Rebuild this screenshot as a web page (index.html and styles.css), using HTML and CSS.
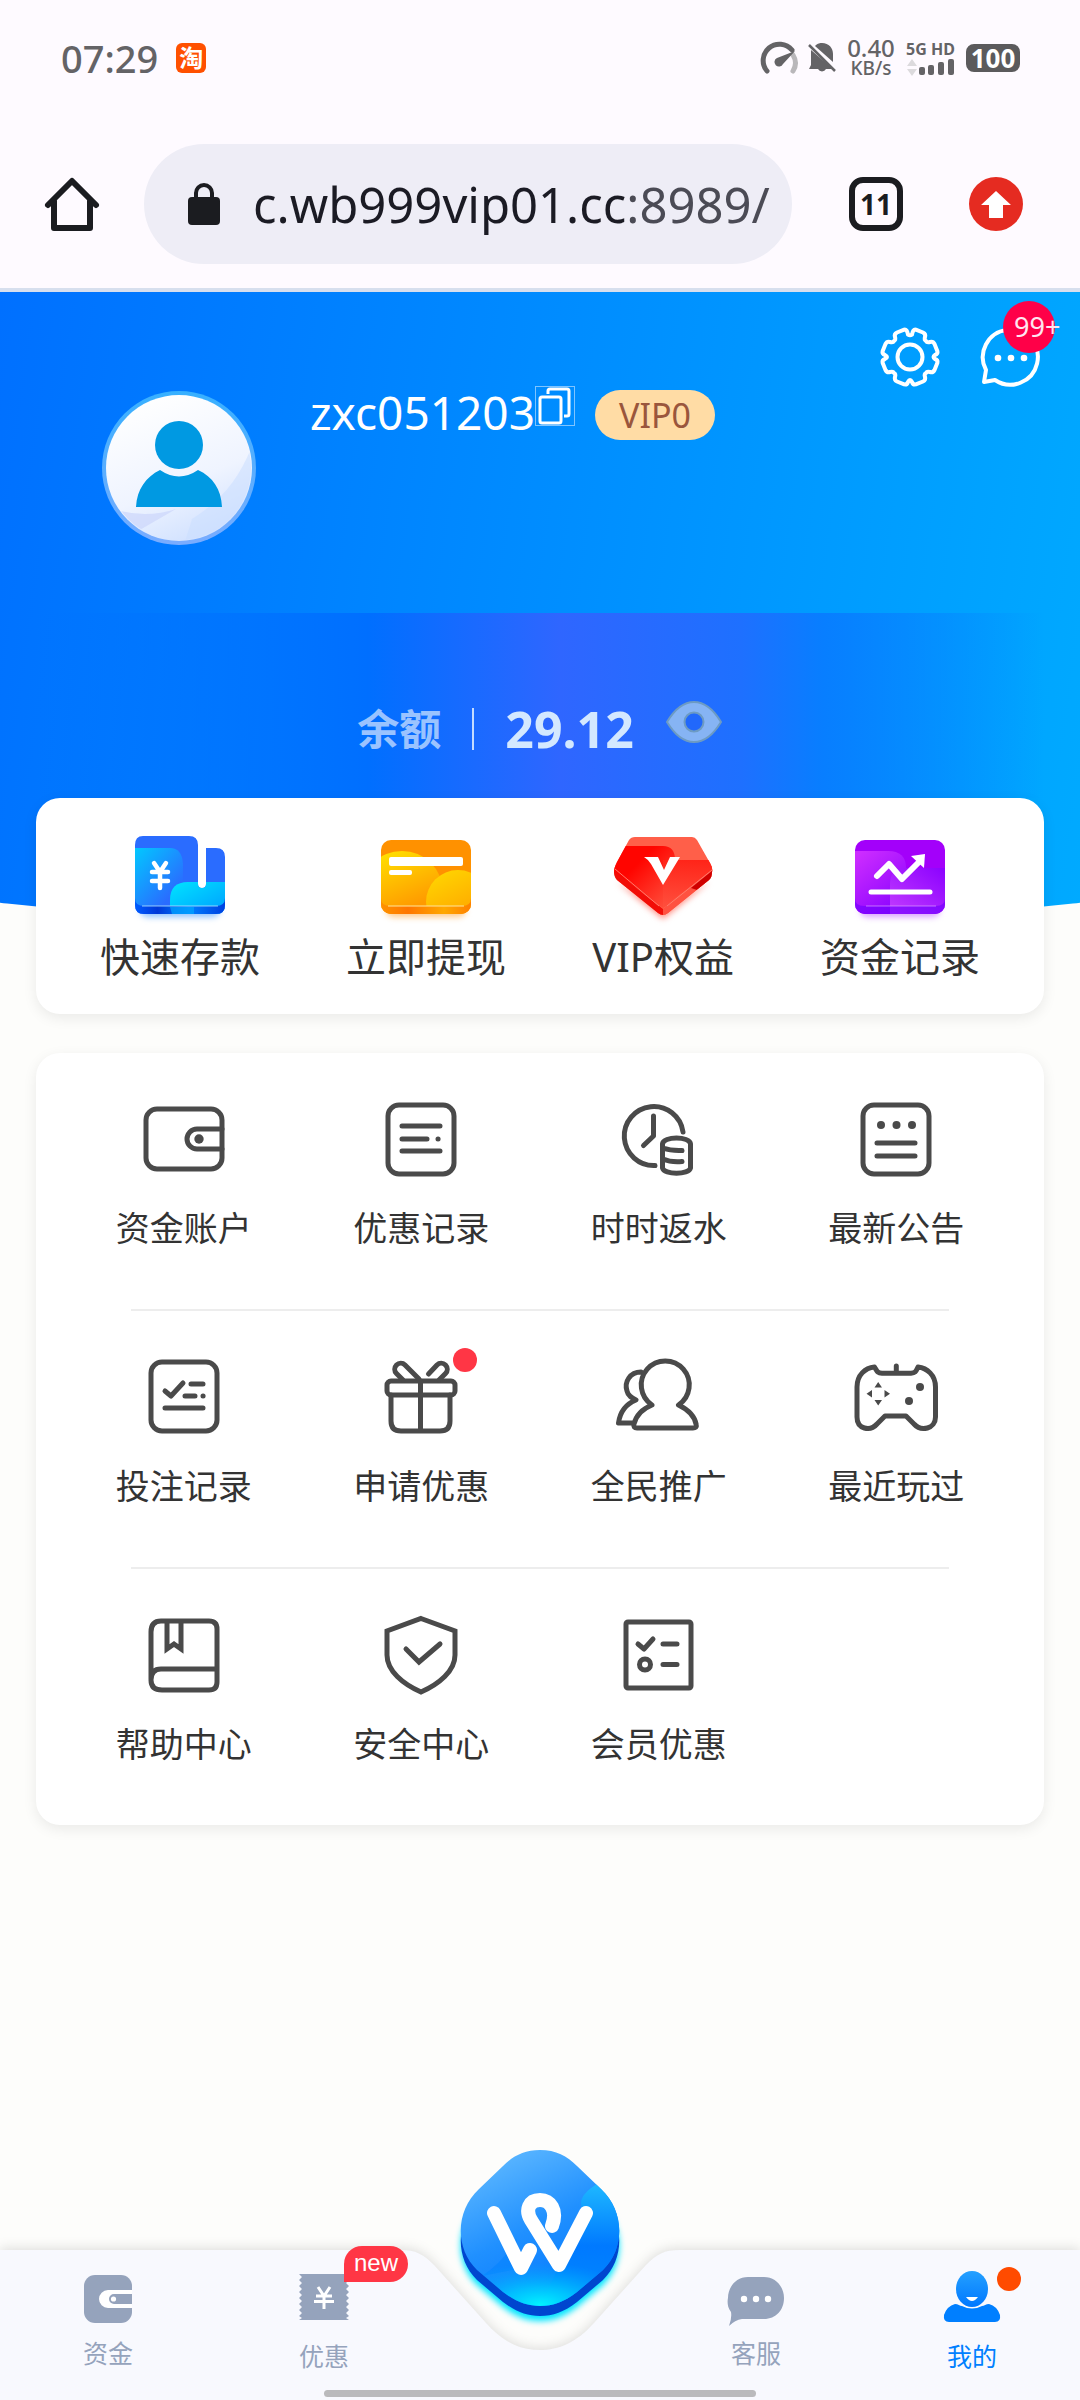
FILE: index.html
```html
<!DOCTYPE html>
<html lang="zh-CN">
<head>
<meta charset="utf-8">
<meta name="viewport" content="width=device-width, initial-scale=1">
<title>我的</title>
<link rel="stylesheet" href="styles.css">
</head>
<body>
<header class="chrome">
  <div class="status">
    <time class="clock">07:29</time>
    <span class="tao">淘</span>
    <div class="status-right">
      <svg class="gauge" width="36" height="32" viewBox="0 0 36 32" fill="none" stroke-linecap="round" stroke-width="5">
        <path d="M31 13 A15 15 0 0 1 31 29" stroke="#b9b7ba"/>
        <path d="M5 29 A15.500 15.500 0 0 1 30 8" stroke="#646366"/>
        <path d="M33 9 L21 22 A4.500 4.500 0 1 1 15 16 Z" fill="#646366"/>
      </svg>
      <svg width="28" height="32" viewBox="0 0 28 32">
        <path d="M7 4 C10 1 12 1 14 1 C21 1 25 6 25 12 V20 L7 4 Z M3 8 L25 27 H18 A4.500 4.500 0 0 1 10 27 H1 L3 23 Z" fill="#646366"/>
        <path d="M1 3 L27 29" stroke="#646366" stroke-width="2.500"/>
      </svg>
      <div class="speed"><span>0.40</span><span class="unit">KB/s</span></div>
      <div class="network">
        <span>5G HD</span>
        <svg width="50" height="18" viewBox="0 0 50 18">
          <path d="M1 8 L6 1 L11 8 Z M1 11 L6 18 L11 11 Z" fill="#dcdadd"/>
          <g fill="#646366"><rect x="13" y="9" width="6" height="8" rx="2"/><rect x="22" y="7" width="6" height="10" rx="2"/><rect x="32" y="4" width="6" height="13" rx="2"/><rect x="42" y="1" width="6" height="16" rx="2"/></g>
        </svg>
      </div>
      <span class="battery">100</span>
    </div>
  </div>
  <div class="toolbar">
    <button class="tool" aria-label="主页">
      <svg width="54" height="54" viewBox="0 0 54 54" fill="none" stroke="#1b1c20" stroke-width="6" stroke-linejoin="round" stroke-linecap="round"><path d="M3 28 L27 4 L51 28 M9 24 V51 H45 V24"/></svg>
    </button>
    <button class="address">
      <svg width="32" height="42" viewBox="0 0 32 42"><rect y="14" width="32" height="28" rx="4" fill="#1b1c20"/><path d="M8 16 V10 A8 8 0 0 1 24 10 V16" fill="none" stroke="#1b1c20" stroke-width="4"/></svg>
      <span class="url">c.wb999vip01.cc<span class="url-rest">:8989/</span></span>
    </button>
    <button class="tool tabs">11</button>
    <button class="tool" aria-label="更新">
      <svg width="54" height="54" viewBox="0 0 54 54"><circle cx="27" cy="27" r="27" fill="#e52b21"/><path d="M27 14 L42 28 H34 V41 H20 V28 H12 Z" fill="#fff"/></svg>
    </button>
  </div>
</header>

<main>
  <section class="hero">
    <div class="profile">
      <svg class="avatar" width="154" height="154" viewBox="0 0 154 154">
        <defs>
          <linearGradient id="face" x1="0.300" y1="0" x2="0.700" y2="1"><stop offset="0" stop-color="#fff"/><stop offset="0.600" stop-color="#eff4ff"/><stop offset="1" stop-color="#cfe0ff"/></linearGradient>
          <linearGradient id="ring" x1="0" y1="0" x2="0" y2="1"><stop offset="0" stop-color="#37b0ff"/><stop offset="1" stop-color="#7aacff"/></linearGradient>
          <clipPath id="disc"><circle cx="77" cy="77" r="72"/></clipPath>
        </defs>
        <circle cx="77" cy="77" r="77" fill="url(#ring)"/>
        <circle cx="77" cy="77" r="73" fill="url(#face)"/>
        <g clip-path="url(#disc)"><path d="M150 55 C138 85 122 108 90 128 L82 154 H154 Z" fill="#cadfff" opacity="0.550"/><path d="M10 118 Q44 128 74 118 L36 140 Z" fill="#ccd6fb" opacity="0.700"/></g>
        <circle cx="77" cy="54" r="24" fill="#0099e2"/>
        <path d="M34 116 C35 98 44 86 58 79 Q77 92 96 79 C111 86 119 98 120 116 Z" fill="#0099e2"/>
      </svg>
      <div class="identity">
        <h1 class="username">zxc051203</h1>
        <button class="copy" aria-label="复制">
          <svg width="40" height="40" viewBox="0 0 40 40" fill="none" stroke="#fff"><rect x="0.500" y="0.500" width="39" height="39" stroke="#7fc4ff"/><g stroke-width="3"><rect x="5" y="11" width="21" height="26" rx="2"/><path d="M13 8 V5 Q13 3 15 3 H32 Q34 3 34 5 V28 Q34 30 32 30 H29"/></g></svg>
        </button>
        <span class="vip">VIP0</span>
      </div>
      <div class="actions">
        <button aria-label="设置">
          <svg width="60" height="60" viewBox="0 0 60 60" fill="none" stroke="#fff" stroke-width="4" stroke-linejoin="round"><path d="M28 7.600 Q30 9 32 7.600 Q33 2 35.800 2.600 L43 5.500 Q46 7 45 10 Q44 13 46 14 Q47 16 50 15 Q53 14 54.500 17 L57.400 24.200 Q58 27 55 28 Q52 30 55 32 Q58 33 57.400 35.800 L54.500 43 Q53 46 50 45 Q47 44 46 46 Q44 47 45 50 Q46 53 43 54.500 L35.800 57.400 Q33 58 32 55 Q30 51 28 55 Q27 58 24.200 57.400 L17 54.500 Q14 53 15 50 Q16 47 14 46 Q13 44 10 45 Q7 46 5.500 43 L2.600 35.800 Q2 33 5 32 Q9 30 5 28 Q2 27 2.600 24.200 L5.500 17 Q7 14 10 15 Q13 16 14 14 Q16 13 15 10 Q14 7 17 5.500 L24.200 2.600 Q27 2 28 7.600 Z"/><circle cx="30" cy="30" r="12.500"/></svg>
        </button>
        <button class="message" aria-label="消息">
          <svg width="60" height="60" viewBox="0 0 60 60"><path d="M5 43 A27.500 27.500 0 1 1 14 53 L3 55 Z" fill="none" stroke="#fff" stroke-width="4" stroke-linejoin="round"/><g fill="#fff"><circle cx="17" cy="31" r="3.300"/><circle cx="30" cy="31" r="3.300"/><circle cx="43" cy="31" r="3.300"/></g></svg>
          <span class="count">99+</span>
        </button>
      </div>
    </div>
    <div class="balance">
      <span class="balance-label">余额</span>
      <i class="bar"></i>
      <strong class="amount">29.12</strong>
      <button class="eye" aria-label="隐藏余额">
        <svg width="58" height="42" viewBox="0 0 58 42"><path d="M2 21 Q14 1 29 1 Q44 1 56 21 Q44 41 29 41 Q14 41 2 21 Z" fill="#86b4f4" stroke="#6d9bc3" stroke-width="2"/><circle cx="29" cy="21" r="9.500" fill="#2168fb" stroke="#6d9bc3" stroke-width="2"/></svg>
      </button>
    </div>
  </section>

  <nav class="card quick">
    <a href="#">
      <svg width="96" height="88" viewBox="0 0 96 88">
        <defs>
          <linearGradient id="b1" x1="0" y1="0" x2="1" y2="1"><stop offset="0" stop-color="#00ccff"/><stop offset="0.800" stop-color="#2a6cff"/></linearGradient>
          <linearGradient id="b2" x1="0" y1="0" x2="1" y2="1"><stop offset="0" stop-color="#00e4ff"/><stop offset="1" stop-color="#009cff"/></linearGradient>
          <linearGradient id="b3"><stop offset="0" stop-color="#005cff"/><stop offset="0.250" stop-color="#0038d8"/><stop offset="0.600" stop-color="#0080ff"/><stop offset="1" stop-color="#003fe0"/></linearGradient>
          <clipPath id="bc"><path d="M11 2 H57 Q66 2 66 11 V50 Q66 54 70 54 Q74 54 74 50 V14 H84 Q93 14 93 23 V71 Q93 80 84 80 H12 Q3 80 3 71 V11 Q3 2 11 2 Z"/></clipPath>
        </defs>
        <rect x="8" y="70" width="80" height="13" rx="8" fill="#8ec2ff" class="glow"/>
        <g clip-path="url(#bc)"><rect width="96" height="88" fill="#2a6cff"/><path d="M0 14 H38 Q50 14 51 30 V72 H0 Z" fill="url(#b1)"/><path d="M38 80 V66 Q38 48 56 48 H96 V80 Z" fill="url(#b2)"/><path d="M3 64 Q3 72 12 72 H84 Q93 72 93 64 V80 H3 Z" fill="url(#b3)"/><path d="M38 73 H62 V80 H40 Z" fill="#00a5ff" opacity="0.700"/><path d="M10 72 H86" stroke="#b5e8ff" opacity="0.800"/></g>
        <path d="M22 29 L28 38 L34 29 M20 38 H36 M20 47 H36 M28 38 V54" fill="none" stroke="#fff" stroke-width="4.500" stroke-linecap="round"/>
      </svg>
      <span>快速存款</span>
    </a>
    <a href="#">
      <svg width="96" height="88" viewBox="0 0 96 88">
        <defs>
          <linearGradient id="o1" x1="0.300" y1="0" x2="0.700" y2="1"><stop offset="0" stop-color="#ffe000"/><stop offset="0.700" stop-color="#ff9a00"/></linearGradient>
          <linearGradient id="o2" x1="0.200" y1="0" x2="0.700" y2="1"><stop offset="0" stop-color="#ffd500"/><stop offset="1" stop-color="#ff9800"/></linearGradient>
          <linearGradient id="o3"><stop offset="0" stop-color="#ff9200"/><stop offset="0.300" stop-color="#ff7600"/><stop offset="0.700" stop-color="#ffa800"/><stop offset="1" stop-color="#ff8000"/></linearGradient>
          <clipPath id="oc"><rect x="3" y="6" width="90" height="74" rx="10"/></clipPath>
        </defs>
        <rect x="8" y="70" width="80" height="13" rx="8" fill="#ffc98a" class="glow"/>
        <g clip-path="url(#oc)"><rect width="96" height="88" fill="#ff9100"/><circle cx="24" cy="58" r="41" fill="url(#o1)"/><circle cx="80" cy="68" r="32" fill="url(#o2)"/><path d="M3 64 Q3 72 12 72 H84 Q93 72 93 64 V80 H3 Z" fill="url(#o3)"/><path d="M10 72 H86" stroke="#ffe59a"/></g>
        <rect x="11" y="23" width="74" height="9" rx="2" fill="#fff"/><rect x="11" y="36" width="23" height="5" rx="2" fill="#fff"/>
      </svg>
      <span>立即提现</span>
    </a>
    <a href="#">
      <svg width="96" height="88" viewBox="0 0 96 88">
        <defs>
          <linearGradient id="r1" x1="0" y1="0" x2="1" y2="0.600"><stop offset="0.300" stop-color="#ff0500"/><stop offset="1" stop-color="#ff6a52"/></linearGradient>
          <linearGradient id="r2" x1="0" y1="1" x2="1" y2="0"><stop offset="0" stop-color="#ff513f"/><stop offset="1" stop-color="#ff0700"/></linearGradient>
          <clipPath id="rc"><path d="M20 3 H77 Q80 3 82 6 L95 29 Q98 34 97 38 Q97 43 94 46 L53 79 Q48 83 43 79 L2 46 Q-1 43 -1 37 Q-1 34 2 28 L14 6 Q16 3 20 3 Z"/></clipPath>
        </defs>
        <path d="M2 48 L48 85 L94 48 L48 70 Z" fill="#ff8c80" class="glow"/>
        <g clip-path="url(#rc)"><rect x="-2" width="102" height="88" fill="#ff5f49"/><path d="M-2 12 H48 Q60 12 60 26 H102 V40 L48 74 L-2 38 Z" fill="url(#r1)"/><path d="M48 26 H98 V36 L48 73 Z" fill="url(#r2)" opacity="0.600"/><path d="M-2 36 L48 75 V88 H-2 Z" fill="#f20d07"/><path d="M98 36 L48 75 V88 H98 Z" fill="#ff5140"/><path d="M98 36 L76 54 L82 56 L98 46 Z" fill="#cf0000"/><path d="M0 35 L44 72 M97 36 L52 72" stroke="#ff7a6c" stroke-width="1"/></g>
        <path d="M29 23 H43 L49 36 L55 23 H65 L48 51 L36 30 Q34 26 29 23 Z" fill="#fff"/>
      </svg>
      <span>VIP权益</span>
    </a>
    <a href="#">
      <svg width="96" height="88" viewBox="0 0 96 88">
        <defs>
          <linearGradient id="p1" x1="0.200" y1="0" x2="0.900" y2="1"><stop offset="0" stop-color="#cc2cff"/><stop offset="1" stop-color="#8600ff"/></linearGradient>
          <linearGradient id="p2" x1="0" y1="1" x2="1" y2="0"><stop offset="0" stop-color="#c33cff"/><stop offset="1" stop-color="#8a00ff"/></linearGradient>
          <clipPath id="pc"><rect x="3" y="6" width="90" height="74" rx="10"/></clipPath>
        </defs>
        <rect x="8" y="70" width="80" height="13" rx="8" fill="#d9a0ff" class="glow"/>
        <g clip-path="url(#pc)"><rect width="96" height="88" fill="#a300fa"/><path d="M0 17 H36 Q54 17 54 34 V80 H0 Z" fill="url(#p1)"/><path d="M38 80 V50 Q38 34 54 34 H96 V80 Z" fill="url(#p2)"/><path d="M3 64 Q3 72 12 72 H84 Q93 72 93 64 V80 H3 Z" fill="#7200ff" opacity="0.650"/><path d="M14 72 H84" stroke="#dc9aff" opacity="0.700"/></g>
        <path d="M25 42 L37 30 L50 45 L67 28" fill="none" stroke="#fff" stroke-width="6" stroke-linecap="round" stroke-linejoin="round"/><path d="M59 22 L73 20 L72 34 Z" fill="#fff"/><path d="M19 58 H78" stroke="#fff" stroke-width="5" stroke-linecap="round"/>
      </svg>
      <span>资金记录</span>
    </a>
  </nav>

  <nav class="card menu">
    <div class="row">
      <a href="#"><svg class="line" viewBox="0 0 84 84"><rect x="4" y="12" width="76" height="60" rx="11"/><path d="M80 32 H55 A10 10 0 0 0 55 52 H80"/><circle class="dot" cx="57" cy="42" r="4.700"/></svg><span>资金账户</span></a>
      <a href="#"><svg class="line" viewBox="0 0 84 84"><rect x="9" y="8" width="66" height="69" rx="11"/><path d="M23 29 H61 M23 42 H48 M59 42 h0.100 M23 54 H61"/></svg><span>优惠记录</span></a>
      <a href="#"><svg class="line" viewBox="0 0 84 84"><path d="M66 35 A29.500 29.500 0 1 0 38 68.500 M36.500 19 V39 L26.500 48.500 M45.500 47 C46 39 73 39 73.500 47 V71 C72 78 47 78 45.500 71 Z M46 51 Q54 54 65 53.500 M46 62 Q54 65.500 65 64.500"/></svg><span>时时返水</span></a>
      <a href="#"><svg class="line" viewBox="0 0 84 84"><rect x="9" y="8" width="66" height="69" rx="11"/><path d="M23 46 H61 M23 59 H61"/><circle class="dot" cx="27" cy="28" r="4"/><circle class="dot" cx="42.500" cy="28" r="4"/><circle class="dot" cx="58" cy="28" r="4"/></svg><span>最新公告</span></a>
    </div>
    <hr>
    <div class="row">
      <a href="#"><svg class="line" viewBox="0 0 84 84"><rect x="9" y="7" width="66" height="69" rx="11"/><path d="M23 36 L29 41 L41 28 M49 29 H61 M43 41 H53 M61 41 h0.100 M23 53 H61"/></svg><span>投注记录</span></a>
      <a href="#"><svg class="line" viewBox="0 0 84 84"><rect x="8" y="26" width="68" height="14" rx="4"/><path d="M12 40 V66 Q12 76 22 76 H61 Q71 76 71 66 V40 M41.500 26 V76 M40 24 L26 10 A6 6 0 0 0 17.500 18.500 L24 25 M49.500 19 L58 10 A6 6 0 0 1 66.500 18.500 L60 25"/></svg><i class="red-dot"></i><span>申请优惠</span></a>
      <a href="#"><svg class="line" viewBox="0 0 84 84"><path d="M35 50 A24 24 0 1 1 61.500 50 C72 55 78 62 79.300 70 Q80 73 76 73 H20 Q16 73 17 69 C19 61 25 54 35 50 Z M24 17 C13 17 7 27 10 36 C11 41 15 43 19 45 C9 49 3 57 1.500 68 H16"/></svg><span>全民推广</span></a>
      <a href="#"><svg class="line" viewBox="0 0 84 84"><path d="M3 62 V32 C3 20 11 13 20.500 12 C23 16 23 18 28 18.300 H57 C62 18 62 16 64 12 C73 13 81.500 20 81.500 32 V62 C81.500 74 67 77 60 69 L52 61 H31 L23 69 C16 77 3 74 3 62 Z M42.300 11 V17"/><circle class="dot" cx="66" cy="32" r="4"/><circle class="dot" cx="55" cy="46" r="4"/><path class="dot" d="M20.500 32.500 L24.200 27 L28 32.500 Z M20.500 45 L24.200 50.500 L28 45 Z M18 35 L12.500 38.700 L18 42.500 Z M30.500 35 L36 38.700 L30.500 42.500 Z"/></svg><span>最近玩过</span></a>
    </div>
    <hr>
    <div class="row">
      <a href="#"><svg class="line" viewBox="0 0 84 84"><path d="M9 66 V19 Q9 8 19 8 H67 Q75 8 75 16 V69 Q75 77 67 77 H20 Q9 77 9 67 Q9 56 19 56 H75 M25 8 V36 L32 31 L39 36 V8" stroke-linejoin="miter"/></svg><span>帮助中心</span></a>
      <a href="#"><svg class="line" viewBox="0 0 84 84"><path d="M42 5.500 L76 18 V42 C76 58 60 71 42 79 C24 71 8 58 8 42 V18 Z M27 36 L40 49 L61 31" stroke-linejoin="miter"/></svg><span>安全中心</span></a>
      <a href="#"><svg class="line" viewBox="0 0 84 84"><rect x="9" y="9" width="65" height="66" rx="2"/><path d="M21 31 L27 36 L36 26 M46 31 H60 M46 51.500 H60"/><circle cx="28" cy="51.500" r="5.500"/></svg><span>会员优惠</span></a>
    </div>
  </nav>
</main>

<nav class="tabbar">
  <div class="tabbar-bg"><i></i><svg width="280" height="150" viewBox="0 0 280 150"><path d="M0 0 C16 0 23 4 34 15 L86 73 C104 93 121 100 140 100 C159 100 176 93 194 73 L246 15 C257 4 264 0 280 0 V150 H0 Z" fill="#f8f9fe"/></svg><i></i></div>
  <a href="#" class="tab"><svg width="60" height="54" viewBox="0 0 60 54"><rect x="6" y="5" width="48" height="48" rx="11" fill="#95a3bc"/><path d="M54 20 H30 A9 9 0 0 0 30 38 H54 V34 H36 A5 5 0 0 1 36 24 H54 Z" fill="#fff"/><circle cx="35.500" cy="29" r="2.600" fill="#fff"/></svg><span>资金</span></a>
  <a href="#" class="tab low"><svg width="60" height="54" viewBox="0 0 60 54"><path d="M5 4 H55 L52 7 L55 10 L52 13 L55 16 L52 19 L55 22 L52 25 L55 28 L52 31 L55 34 L52 37 L55 40 L52 43 L55 46 L52 48 L55 50 H5 L8 48 L5 46 L8 43 L5 40 L8 37 L5 34 L8 31 L5 28 L8 25 L5 22 L8 19 L5 16 L8 13 L5 10 L8 7 Z" fill="#95a3bc"/><path d="M24 17 L30 26 L36 17 M22 26 H38 M20 31.500 H40 M30 26 V39" fill="none" stroke="#fff" stroke-width="3"/></svg><span>优惠</span><b class="new">new</b></a>
  <a href="#" class="tab center" aria-label="首页">
    <svg class="logo" width="160" height="178" viewBox="0 0 160 178">
      <defs>
        <linearGradient id="w1" x1="0.200" y1="0" x2="0.700" y2="1"><stop offset="0" stop-color="#61baff"/><stop offset="0.500" stop-color="#2090ff"/><stop offset="1" stop-color="#0076ff"/></linearGradient>
        <radialGradient id="w2" cx="0.500" cy="0.950" r="0.600"><stop offset="0" stop-color="#00f4ff"/><stop offset="0.400" stop-color="#00ccff" stop-opacity="0.800"/><stop offset="1" stop-color="#00a8ff" stop-opacity="0"/></radialGradient>
        <linearGradient id="w3" x1="0" y1="0" x2="0" y2="1"><stop offset="0" stop-color="#1eb8ff"/><stop offset="0.500" stop-color="#0079ff"/><stop offset="1" stop-color="#008cff"/></linearGradient>
        <path id="gem" d="M80 2 C64 2 53 8 43 18 L19 41 C-5 63 -5 101 17 122 L43 144 C56 154 67 158 80 158 C93 158 104 154 117 144 L143 122 C165 101 165 63 141 41 L117 18 C107 8 96 2 80 2 Z"/>
        <clipPath id="gc"><use href="#gem"/></clipPath>
      </defs>
      <use href="#gem" y="15" fill="#00e6ff" class="glow"/>
      <use href="#gem" y="10" fill="#0046cf"/>
      <use href="#gem" fill="url(#w1)"/>
      <g clip-path="url(#gc)"><path d="M137 36 Q114 50 124 64 L96 124 L80 160 H160 V50 Z" fill="url(#w3)"/><path d="M56 90 L62 120 L22 128 Q46 112 56 90 Z" fill="#0081ff" opacity="0.500"/><rect y="90" width="160" height="70" fill="url(#w2)"/></g>
      <path d="M34 65 L61 120 L70 102 M92 78 C98 62 90 52 80 52 C69 52 65 62 71 72 L99 117 L126 65" fill="none" stroke="#fff" stroke-width="14" stroke-linecap="round" stroke-linejoin="round"/>
    </svg>
  </a>
  <a href="#" class="tab"><svg width="60" height="54" viewBox="0 0 60 54"><path d="M22 7 H38 C50 7 58 17 58 28 C58 40 50 49 38 49 H16 Q9 50 3 56 Q6 48 5 42 C0 36 2 28 2 28 C2 17 10 7 22 7 Z" fill="#95a3bc"/><g fill="#fff"><circle cx="18" cy="29" r="3.200"/><circle cx="30" cy="29" r="3.200"/><circle cx="42" cy="29" r="3.200"/></g></svg><span>客服</span></a>
  <a href="#" class="tab low active" aria-current="page"><svg width="60" height="54" viewBox="0 0 60 54"><defs><linearGradient id="u" x1="0" y1="0" x2="0" y2="1"><stop offset="0" stop-color="#24a0ff"/><stop offset="1" stop-color="#0078ff"/></linearGradient></defs><path d="M13 34 C16 34 18 36 20 36 Q30 41 40 36 C42 36 44 34 47 34 Q55 36 58 45 Q59 52 53 52 H7 Q1 52 2 45 Q5 36 13 34 Z" fill="#007fff"/><ellipse cx="30" cy="19" rx="16" ry="18" fill="url(#u)"/><path d="M24 27 H36 Q30 35 24 27 Z" fill="#fff"/></svg><span>我的</span><i class="orange-dot"></i></a>
  <div class="indicator"></div>
</nav>
</body>
</html>
```
FILE: styles.css
```css
* { box-sizing: border-box; }
body {
  margin: 0;
  min-height: 100vh;
  display: flex;
  flex-direction: column;
  background: #fdfdfb;
  color: #333;
  font-family: "Noto Sans", "Noto Sans CJK SC", sans-serif;
}
button { border: 0; padding: 0; background: none; font: inherit; color: inherit; }
a { color: inherit; text-decoration: none; }
svg { display: block; flex: none; overflow: visible; }
.glow { filter: blur(3px); }

/* Browser chrome */
.chrome { background: #fefaff; border-bottom: 4px solid #d7dfee; }
.status {
  display: flex;
  align-items: center;
  height: 116px;
  padding: 0 60px 0 61px;
  color: #646366;
}
.clock { font-size: 38px; line-height: 44px; font-weight: 500; }
.tao {
  width: 30px;
  height: 30px;
  margin-left: 18px;
  border-radius: 6px;
  background: #ff5000;
  color: #fff;
  font-size: 24px;
  line-height: 29px;
  font-weight: 700;
  text-align: center;
}
.status-right { display: flex; align-items: center; gap: 10px; margin-left: auto; }
.speed { display: flex; flex-direction: column; align-items: center; width: 50px; font-size: 24px; line-height: 20px; font-weight: 500; }
.speed .unit { font-size: 19px; }
.network { width: 50px; font-size: 16px; line-height: 18px; font-weight: 700; white-space: nowrap; }
.battery {
  width: 54px;
  height: 28px;
  border-radius: 8px;
  background: #5b5a5c;
  color: #fff;
  font-size: 26px;
  line-height: 28px;
  font-weight: 700;
  text-align: center;
}
.toolbar { display: flex; align-items: center; height: 172px; padding: 28px 57px 24px 45px; }
.tool { flex: none; width: 54px; height: 54px; }
.address {
  display: flex;
  align-items: center;
  flex: 1;
  min-width: 0;
  height: 120px;
  margin: 0 57px 0 45px;
  padding: 0 20px 0 44px;
  border-radius: 60px;
  background: #eeedf6;
  gap: 33px;
  overflow: hidden;
}
.url { font-size: 49px; line-height: 60px; color: #1b1b24; white-space: nowrap; }
.url-rest { color: #4b4b55; }
.tabs {
  margin-right: 66px;
  border: 6px solid #1b1c20;
  border-radius: 14px;
  color: #1b1c20;
  font-size: 28px;
  line-height: 40px;
  font-weight: 700;
}

/* Blue profile header */
.hero {
  height: 639px;
  background: linear-gradient(98deg, #0070ff, #00aaff);
  clip-path: ellipse(170% 100% at 50% 0);
}
.profile { display: flex; height: 321px; padding: 35px 39px 0 102px; }
.avatar { margin-top: 64px; }
.identity { display: flex; align-items: flex-start; height: 54px; margin: 59px 0 0 54px; }
.username { margin: 0; color: #fff; font-size: 46px; line-height: 52px; font-weight: 400; }
.vip {
  align-self: flex-end;
  width: 120px;
  height: 50px;
  margin-left: 20px;
  border-radius: 25px;
  background: #ffdca5;
  color: #9a563c;
  font-size: 34px;
  line-height: 50px;
  text-align: center;
}
.actions { display: flex; gap: 41px; height: 60px; margin-left: auto; }
.message { position: relative; }
.count {
  position: absolute;
  top: -26px;
  left: 22px;
  width: 52px;
  height: 52px;
  padding-left: 11px;
  border-radius: 50%;
  background: #ff0048;
  color: #ffe6f0;
  font-size: 27px;
  line-height: 52px;
  text-align: left;
}
.balance {
  display: flex;
  justify-content: center;
  align-items: center;
  gap: 31px;
  height: 185px;
  margin: 0 36px;
  padding-top: 46px;
  background: linear-gradient(90deg, rgba(0,112,255,0), #006fff 33%, #2f66ff 52%, #1e70ff 70%, #087eff 78%, rgba(0,150,255,0));
}
.balance-label { color: #9ac3ff; font-size: 42px; line-height: 50px; font-weight: 700; }
.bar { width: 2px; height: 42px; background: #c3dcff; }
.amount { color: #d3e8ff; font-size: 50px; line-height: 60px; font-weight: 700; }
.eye { margin-bottom: 14px; }

/* Cards */
.card { margin: 0 36px; border-radius: 24px; background: #fff; box-shadow: 0 4px 14px rgba(0,0,0,.08); }
.quick {
  position: relative;
  display: flex;
  justify-content: space-between;
  margin-top: -133px;
  padding: 36px 64px 27px;
}
.quick a { display: flex; flex-direction: column; align-items: center; gap: 5px; font-size: 40px; line-height: 60px; }
.menu { margin-top: 39px; }
.row { display: grid; grid-template-columns: repeat(4, 1fr); height: 256px; padding: 44px 29px 0; }
.row a { display: flex; flex-direction: column; align-items: center; gap: 23px; position: relative; font-size: 34px; line-height: 48px; }
.menu hr { height: 2px; margin: 0 95px; border: 0; background: #ededed; }
.line {
  width: 84px;
  height: 84px;
  fill: none;
  stroke: #4a4a4a;
  stroke-width: 5;
  stroke-linecap: round;
  stroke-linejoin: round;
}
.dot { fill: #4a4a4a; stroke: none; }
.red-dot {
  position: absolute;
  top: -7px;
  left: calc(50% + 32px);
  width: 24px;
  height: 24px;
  border-radius: 50%;
  background: #ff3645;
}

/* Bottom tab bar */
.tabbar { position: relative; display: grid; grid-template-columns: repeat(5, 1fr); height: 150px; margin-top: auto; color: #95a3bc; }
.tabbar-bg { position: absolute; inset: 0; display: flex; filter: drop-shadow(0 -2px 6px rgba(0,0,0,.12)); }
.tabbar-bg i { flex: 1; background: #f8f9fe; }
.tab { position: relative; display: flex; flex-direction: column; align-items: center; gap: 11px; padding-top: 20px; font-size: 25px; line-height: 36px; }
.low { gap: 14px; }
.active { color: #0080ff; }
.center { padding: 0; }
.logo { margin-top: -102px; }
.new {
  position: absolute;
  top: -4px;
  left: calc(50% + 20px);
  width: 64px;
  height: 36px;
  border-radius: 18px 18px 18px 0;
  background: #ff3645;
  color: #fff;
  font: 400 24px/34px "Liberation Sans", sans-serif;
  text-align: center;
}
.orange-dot {
  position: absolute;
  top: 17px;
  left: calc(50% + 25px);
  width: 24px;
  height: 24px;
  border-radius: 50%;
  background: #ff4b00;
}
.indicator {
  position: absolute;
  bottom: 3px;
  left: 30%;
  right: 30%;
  height: 7px;
  border-radius: 4px;
  background: #bababc;
}
```
